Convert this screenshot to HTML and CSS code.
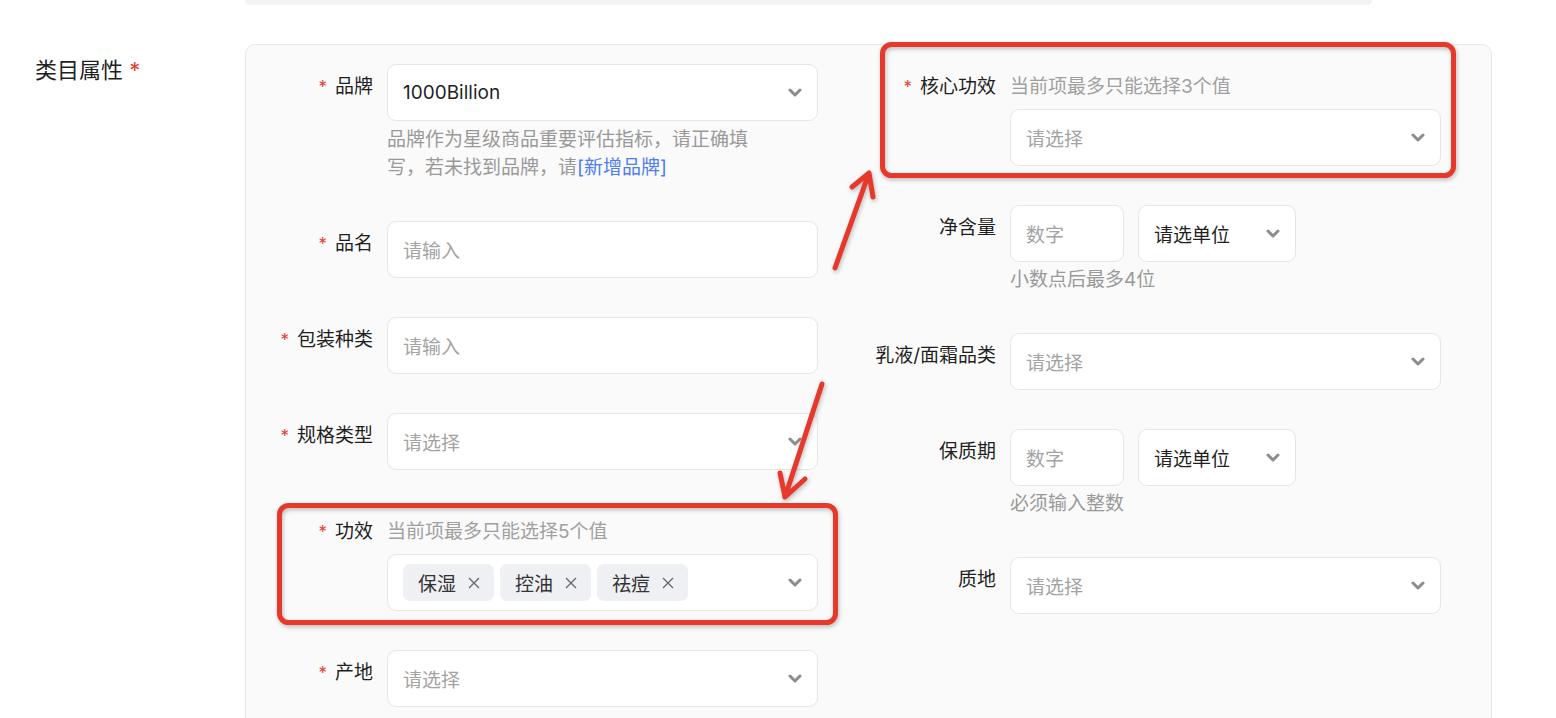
FILE: index.html
```html
<!DOCTYPE html>
<html lang="zh-CN">
<head>
  <meta charset="UTF-8">
  <meta name="viewport" content="width=device-width, initial-scale=1" />
  <title>类目属性</title>
  <link rel="stylesheet" href="styles.css">
</head>
<body>
<div class="page">
  <div class="top-card"></div>

  <div class="section">
    <div class="section-label">类目属性 <span class="req-big">*</span></div>

    <div class="panel">
      <!-- left column -->
      <div class="col">
        <div class="field">
          <div class="label"><span class="req">*</span>品牌</div>
          <div class="control">
            <div class="box"><span>1000Billion</span><svg class="chevron" width="14" height="9" viewBox="0 0 14 9"><polyline points="2,2 7,7 12,2"/></svg></div>
            <div class="help">品牌作为星级商品重要评估指标，请正确填写，若未找到品牌，请<a class="link">[新增品牌]</a></div>
          </div>
        </div>

        <div class="field">
          <div class="label"><span class="req">*</span>品名</div>
          <div class="control">
            <div class="box"><span class="placeholder">请输入</span></div>
          </div>
        </div>

        <div class="field">
          <div class="label"><span class="req">*</span>包装种类</div>
          <div class="control">
            <div class="box"><span class="placeholder">请输入</span></div>
          </div>
        </div>

        <div class="field">
          <div class="label"><span class="req">*</span>规格类型</div>
          <div class="control">
            <div class="box"><span class="placeholder">请选择</span><svg class="chevron" width="14" height="9" viewBox="0 0 14 9"><polyline points="2,2 7,7 12,2"/></svg></div>
          </div>
        </div>

        <div class="field">
          <div class="label"><span class="req">*</span>功效</div>
          <div class="control">
            <div class="hint">当前项最多只能选择5个值</div>
            <div class="box tags">
              <span class="tag">保湿<svg class="close" width="12" height="12" viewBox="0 0 12 12"><path d="M1 1 L11 11 M11 1 L1 11"/></svg></span>
              <span class="tag">控油<svg class="close" width="12" height="12" viewBox="0 0 12 12"><path d="M1 1 L11 11 M11 1 L1 11"/></svg></span>
              <span class="tag">祛痘<svg class="close" width="12" height="12" viewBox="0 0 12 12"><path d="M1 1 L11 11 M11 1 L1 11"/></svg></span>
              <svg class="chevron" width="14" height="9" viewBox="0 0 14 9"><polyline points="2,2 7,7 12,2"/></svg>
            </div>
          </div>
        </div>

        <div class="field">
          <div class="label"><span class="req">*</span>产地</div>
          <div class="control">
            <div class="box"><span class="placeholder">请选择</span><svg class="chevron" width="14" height="9" viewBox="0 0 14 9"><polyline points="2,2 7,7 12,2"/></svg></div>
          </div>
        </div>
      </div>

      <!-- right column -->
      <div class="col">
        <div class="field">
          <div class="label"><span class="req">*</span>核心功效</div>
          <div class="control">
            <div class="hint">当前项最多只能选择3个值</div>
            <div class="box"><span class="placeholder">请选择</span><svg class="chevron" width="14" height="9" viewBox="0 0 14 9"><polyline points="2,2 7,7 12,2"/></svg></div>
          </div>
        </div>

        <div class="field">
          <div class="label">净含量</div>
          <div class="control">
            <div class="pair">
              <div class="box num"><span class="placeholder">数字</span></div>
              <div class="box unit"><span>请选单位</span><svg class="chevron" width="14" height="9" viewBox="0 0 14 9"><polyline points="2,2 7,7 12,2"/></svg></div>
            </div>
            <div class="help short">小数点后最多4位</div>
          </div>
        </div>

        <div class="field">
          <div class="label">乳液/面霜品类</div>
          <div class="control">
            <div class="box"><span class="placeholder">请选择</span><svg class="chevron" width="14" height="9" viewBox="0 0 14 9"><polyline points="2,2 7,7 12,2"/></svg></div>
          </div>
        </div>

        <div class="field">
          <div class="label">保质期</div>
          <div class="control">
            <div class="pair">
              <div class="box num"><span class="placeholder">数字</span></div>
              <div class="box unit"><span>请选单位</span><svg class="chevron" width="14" height="9" viewBox="0 0 14 9"><polyline points="2,2 7,7 12,2"/></svg></div>
            </div>
            <div class="help short">必须输入整数</div>
          </div>
        </div>

        <div class="field">
          <div class="label">质地</div>
          <div class="control">
            <div class="box"><span class="placeholder">请选择</span><svg class="chevron" width="14" height="9" viewBox="0 0 14 9"><polyline points="2,2 7,7 12,2"/></svg></div>
          </div>
        </div>
      </div>
    </div>
  </div>

  <!-- screenshot annotations -->
  <svg class="marks" width="1556" height="718" viewBox="0 0 1556 718">
    <rect x="882.5" y="44.5" width="571" height="131" rx="9"/>
    <rect x="279.5" y="505.5" width="556" height="117" rx="9"/>
    <path d="M835 268 L869 173 M852 187 L869 173 L873 197"/>
    <path d="M822 384 L785 497 M780 473 L785 497 L805 479"/>
  </svg>
</div>
</body>
</html>
```

FILE: styles.css
```css
body {
  margin: 0;
  font-family: "Inter", "Noto Sans CJK SC", sans-serif;
  background: #fff;
  color: #1f1f1f;
}
.page {
  position: relative;
  width: 1556px;
  height: 718px;
  overflow: hidden;
}
.top-card {
  margin-left: 245px;
  width: 1127px;
  height: 5px;
  background: #f2f3f5;
  border-radius: 0 0 10px 10px;
}
.section {
  display: flex;
  margin-top: 39px;
}
.section-label {
  width: 245px;
  box-sizing: border-box;
  padding: 12px 0 0 35px;
  font-size: 22px;
  line-height: 28px;
}
.req-big {
  color: #e8402f;
}
.panel {
  width: 1247px;
  box-sizing: border-box;
  border: 1px solid #e8e8e8;
  border-radius: 10px;
  background: #fafafa;
  padding: 19px 50px 80px 0;
  display: grid;
  grid-template-columns: 572px 572px;
  column-gap: 51px;
  align-items: start;
}
.col {
  display: flex;
  flex-direction: column;
  gap: 39px;
}
.field {
  display: grid;
  grid-template-columns: 127px 431px;
  column-gap: 14px;
  align-items: start;
}
.label {
  text-align: right;
  font-size: 19px;
  line-height: 28px;
  padding-top: 9px;
  white-space: nowrap;
}
.req {
  color: #e8402f;
  font-size: 17px;
  margin-right: 8px;
}
.hint {
  font-size: 19px;
  line-height: 28px;
  color: #a0a0a0;
  padding-top: 9px;
  margin-bottom: 8px;
  white-space: nowrap;
}
.box {
  height: 57px;
  box-sizing: border-box;
  border: 1px solid #e6e6e6;
  border-radius: 9px;
  background: #fff;
  display: flex;
  align-items: center;
  padding: 0 15px;
  font-size: 19px;
}
.placeholder {
  color: #a3a3a3;
}
.chevron {
  margin-left: auto;
  fill: none;
  stroke: #8c8c8c;
  stroke-width: 3;
  stroke-linecap: round;
  stroke-linejoin: round;
}
.help {
  margin-top: 5px;
  width: 372px;
  font-size: 19px;
  line-height: 28px;
  color: #999;
}
.help.short {
  margin-top: 4px;
}
.link {
  color: #4d7cf6;
}
.tags {
  gap: 6px;
}
.tag {
  display: flex;
  align-items: center;
  gap: 12px;
  height: 37px;
  padding: 0 14px 0 15px;
  background: #eff0f4;
  border-radius: 7px;
  color: #333;
}
.close {
  fill: none;
  stroke: #666;
  stroke-width: 1.3;
}
.pair {
  display: flex;
  gap: 14px;
}
.box.num {
  width: 114px;
}
.box.unit {
  width: 158px;
}
.marks {
  position: absolute;
  top: 0;
  left: 0;
  pointer-events: none;
  fill: none;
  stroke: #e6392c;
  stroke-width: 5;
  stroke-linecap: round;
  stroke-linejoin: round;
  filter: drop-shadow(1px 2px 2px rgba(0, 0, 0, 0.25));
}
```
